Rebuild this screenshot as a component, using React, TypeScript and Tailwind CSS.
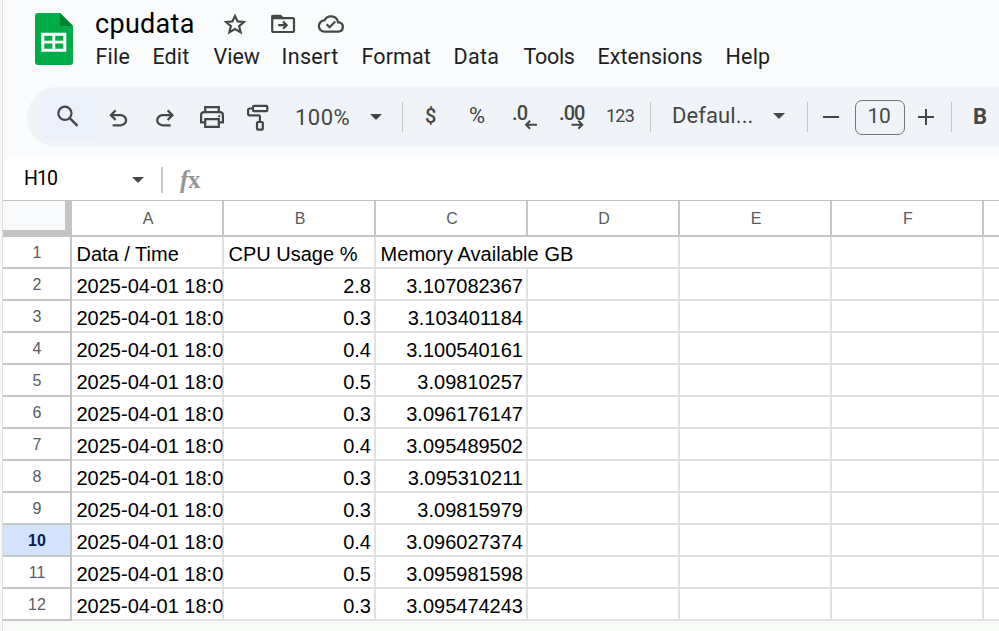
import React from "react";

const menus = [
  { label: "File", cls: "w-[57px] tracking-[0.2px]" },
  { label: "Edit", cls: "w-[61px] tracking-[0.1px]" },
  { label: "View", cls: "w-[68px] tracking-[0px]" },
  { label: "Insert", cls: "w-[80px] tracking-[0.35px]" },
  { label: "Format", cls: "w-[92px] tracking-[0.1px]" },
  { label: "Data", cls: "w-[70px] tracking-[0.3px]" },
  { label: "Tools", cls: "w-[74px] tracking-[-0.3px]" },
  { label: "Extensions", cls: "w-[128px] tracking-[0.05px]" },
  { label: "Help", cls: "w-[60px] tracking-[0.2px]" },
];

const columns = ["A", "B", "C", "D", "E", "F"];

const rows = [
  ["2.8", "3.107082367"],
  ["0.3", "3.103401184"],
  ["0.4", "3.100540161"],
  ["0.5", "3.09810257"],
  ["0.3", "3.096176147"],
  ["0.4", "3.095489502"],
  ["0.3", "3.095310211"],
  ["0.3", "3.09815979"],
  ["0.4", "3.096027374"],
  ["0.5", "3.095981598"],
  ["0.3", "3.095474243"],
];

function SheetsLogo() {
  return (
    <svg width="38" height="52" viewBox="0 0 38 52" className="mt-[13px] shrink-0">
      <path d="M3 0H25L38 13V49a3 3 0 0 1-3 3H3a3 3 0 0 1-3-3V3a3 3 0 0 1 3-3Z" fill="#00ac47" />
      <path d="M25 0L38 13H25Z" fill="#00832d" />
      <path
        d="M6.3 19.7H31.3V38.7H6.3ZM9.3 22.7V27.7H17.4V22.7ZM20.2 22.7V27.7H28.3V22.7ZM9.3 30.6V35.7H17.4V30.6ZM20.2 30.6V35.7H28.3V30.6Z"
        fill="#fff"
        fillRule="evenodd"
      />
    </svg>
  );
}

function TitleIcons() {
  return (
    <svg width="130" height="30" viewBox="220 8 130 30" fill="none" stroke="#444746" strokeWidth="2">
      <path
        d="M235 16L237.6 21.4L243.9 22L239.1 26.1L240.7 32.4L235 29L229.3 32.4L230.9 26.1L226.1 22L232.4 21.4Z"
        strokeWidth="2.1"
      />
      <path d="M272.2 17V30.5Q272.2 32 273.7 32H292.6Q294 32 294 30.5V19.6Q294 18.2 292.6 18.2H282.8L280.4 15.8H273.6Q272.2 15.8 272.2 17Z" strokeWidth="2.2" />
      <path d="M271.5 15H280.8L284 19.3H271.5Z" fill="#444746" stroke="none" />
      <path d="M278.2 25.2H286.4M283 21.6L286.7 25.2L283 28.8" strokeWidth="2.2" />
      <path
        d="M324.5 31.6H338.6A4.7 4.7 0 0 0 339.4 22.4H338.1A7.3 7.3 0 0 0 324.4 20.4A5.6 5.6 0 0 0 324.5 31.6Z"
        strokeWidth="2.3"
      />
      <path d="M326.6 24.3L329.6 27.2L335.2 21.6" strokeWidth="2.1" />
    </svg>
  );
}

const undoPath =
  "M7 19v-2h7.1q1.575 0 2.738-1T18 13.5 16.838 11 14.1 10H7.8l2.6 2.6L9 14 4 9l5-5 1.4 1.4L7.8 8h6.3q2.425 0 4.163 1.575T20 13.5t-1.737 3.925T14.1 19z";

function EditIcons() {
  return (
    <>
      <div className="flex h-[42px] w-[55px] items-center bg-[#ecf0fb]">
        <svg width="55" height="42" viewBox="41 95.5 55 42" fill="none" stroke="#444746" strokeWidth="2.2">
          <circle cx="64.9" cy="112.8" r="6.6" />
          <path d="M69.5 117.4L77.5 125.4" strokeWidth="2.5" />
        </svg>
      </div>
      <svg width="104" height="42" viewBox="96 96 104 42" fill="#444746">
        <path transform="translate(104.8 105.1) scale(1.12)" d={undoPath} />
        <path transform="translate(178.5 105.1) scale(-1.12 1.12)" d={undoPath} />
      </svg>
      <svg width="95" height="42" viewBox="200 96 95 42" fill="none" stroke="#444746" strokeWidth="2.2">
        <path d="M205.2 112V107.1H218.8V112" />
        <path d="M205 122.4H201.1V115.2Q201.1 112.2 204.1 112.2H219.9Q222.9 112.2 222.9 115.2V122.4H219" />
        <path d="M205.2 119.2H218.8V126.8H205.2Z" />
        <circle cx="219.2" cy="116.1" r="1.2" fill="#444746" stroke="none" />
        <rect x="253" y="105.8" width="14.3" height="5.4" rx="1" />
        <path d="M253 108.5H249.6Q248.1 108.5 248.1 110V113.8Q248.1 115.3 249.6 115.3H258.7Q259.9 115.3 259.9 116.6V121.7" />
        <rect x="257" y="122" width="5.8" height="7.7" rx="1" />
      </svg>
    </>
  );
}

function Caret() {
  return (
    <svg width="12" height="6" viewBox="0 0 12 6" className="shrink-0">
      <path d="M0 0H12L6 6Z" fill="#444746" />
    </svg>
  );
}

function Divider() {
  return <div className="h-[30px] w-px shrink-0 bg-[#c7c7c7]" />;
}

function Decimals({ digits, more }: { digits: string; more?: boolean }) {
  return (
    <div className="flex h-[30px] w-[28px] flex-col">
      <span className="h-[18px] text-[20px] leading-[22px] font-medium tracking-[-0.9px]">{digits}</span>
      <svg width="28" height="11" viewBox="0 0 28 11" fill="none" stroke="#444746" strokeWidth="2" className="shrink-0">
        {more ? (
          <path d="M12.5 4.7H23.2M19.3 0.7L23.3 4.7L19.3 8.7" />
        ) : (
          <path d="M25 4.7H14.2M18.1 0.7L14.1 4.7L18.1 8.7" />
        )}
      </svg>
    </div>
  );
}

function Toolbar() {
  return (
    <div className="ml-[24px] flex h-[60px] items-center overflow-hidden rounded-l-[30px] bg-[#f0f3f8] pl-[14px] text-[#444746]">
      <EditIcons />
      <span className="w-[75px] pt-px text-[22px] leading-[24px] tracking-[0.5px]">100%</span>
      <Caret />
      <div className="w-[20px] shrink-0" />
      <Divider />
      <span className="w-[66px] pb-[2px] pl-[22px] text-[20px] leading-[24px] font-medium">$</span>
      <span className="w-[43px] pb-[3px] text-[22px] leading-[24px]">%</span>
      <div className="w-[47px] pb-px">
        <Decimals digits=".0" />
      </div>
      <div className="w-[47px] pb-px">
        <Decimals digits=".00" more />
      </div>
      <span className="w-[44px] pb-[2px] text-[18px] leading-[24px] tracking-[-0.8px]">123</span>
      <Divider />
      <span className="w-[122px] shrink-0 pb-[2px] pl-[21px] text-[22px] leading-[24px] tracking-[0.1px]">Defaul...</span>
      <div className="w-[34px] shrink-0 pb-[2px]">
        <Caret />
      </div>
      <Divider />
      <div className="ml-[15px] h-[2px] w-[16px] shrink-0 bg-[#444746]" />
      <div className="mr-[13px] ml-[16px] flex h-[35px] w-[50px] shrink-0 items-center justify-center rounded-[7px] border border-[#747775] pr-[2px] text-[21px] tracking-[-0.4px]">
        10
      </div>
      <svg width="16" height="16" viewBox="0 0 16 16" stroke="#444746" strokeWidth="2" className="shrink-0">
        <path d="M0 8H16M8 0V16" />
      </svg>
      <div className="w-[17px] shrink-0" />
      <Divider />
      <span className="pl-[21px] text-[22px] leading-[24px] font-bold">B</span>
    </div>
  );
}

function FunctionIcon() {
  return (
    <span className="ml-[17px] flex h-[28px] items-center font-['Liberation_Serif',serif] text-[25px] leading-[28px] font-bold text-[#949696]">
      <i className="w-[8px]">f</i>
      <span>x</span>
    </span>
  );
}

function FormulaBar() {
  return (
    <div className="flex h-[41px] items-center bg-white pl-[21px]">
      <span className="w-[108px] pb-px text-[19.5px] leading-[24px] tracking-[-0.9px] text-black">H10</span>
      <Caret />
      <div className="mt-px ml-[17px] h-[26px] w-[2px] bg-[#c7c7c7]" />
      <FunctionIcon />
    </div>
  );
}

function HeadCells() {
  return (
    <div className="flex h-[36px] border-b-2 border-[#c4c6c5]">
      <div className="-mb-[2px] h-[36px] w-[69px] shrink-0 border-r-[7px] border-b-[7px] border-[#c4c4c4] bg-[#f8f9fa]" />
      {columns.map((c) => (
        <div
          key={c}
          className="flex h-[34px] w-[152px] shrink-0 items-center justify-center border-r-2 border-[#c4c6c5] pt-[2px] pl-[2px] text-[16px] text-[#575b5f]"
        >
          {c}
        </div>
      ))}
    </div>
  );
}

function RowHead({ n }: { n: number }) {
  const tone = n === 10 ? "bg-[#d3e3fd] font-bold text-[#041e49]" : "bg-white text-[#575b5f]";
  return (
    <div
      className={
        "flex h-[32px] w-[69px] shrink-0 items-center justify-center border-r-2 border-b-2 border-[#c4c6c5] pt-px pl-px text-[16px] " + tone
      }
    >
      {n}
    </div>
  );
}

const cell = "h-[32px] w-[152px] shrink-0 border-r-2 border-b-2 border-[#e1e1e1] leading-[34px] whitespace-nowrap";

function Grid() {
  return (
    <div className="border-t border-[#c0c0c0] bg-white font-['Liberation_Sans',Arial,sans-serif] text-[20px] text-black">
      <HeadCells />
      <div className="flex">
        <RowHead n={1} />
        <div className={cell + " pl-[4.5px]"}>Data / Time</div>
        <div className={cell + " pl-[4.5px]"}>CPU Usage %</div>
        <div className="h-[32px] w-[304px] shrink-0 border-r-2 border-b-2 border-[#e1e1e1] pl-[4.5px] leading-[34px] tracking-[0.05px]">
          Memory Available GB
        </div>
        <div className={cell} />
        <div className={cell} />
        <div className={cell} />
      </div>
      {rows.map(([cpu, mem], i) => (
        <div key={i} className="flex">
          <RowHead n={i + 2} />
          <div className={cell + " pl-[4.5px]"}>
            <div className="-mr-[2px] overflow-hidden">2025-04-01 18:0</div>
          </div>
          <div className={cell + " pr-[3px] text-right"}>{cpu}</div>
          <div className={cell + " pr-[3px] text-right"}>{mem}</div>
          <div className={cell} />
          <div className={cell} />
          <div className={cell} />
          <div className={cell} />
        </div>
      ))}
    </div>
  );
}

export default function App() {
  return (
    <div className="flex h-[631px] w-[999px] overflow-hidden bg-[#f9fbfd] font-['Roboto',sans-serif]">
      <div className="w-[3px] shrink-0 border-r border-[#dedfe0] bg-[#f7f7f7]" />
      <div className="w-[996px] shrink-0 overflow-hidden bg-[#f8faf8]">
        <header className="flex h-[87px] bg-[#f9fbfd] pl-[32px]">
          <SheetsLogo />
          <div className="ml-[22px] pt-[8px]">
            <div className="flex h-[30px] items-center">
              <h1 className="w-[125px] pt-[2px] text-[27px] leading-[30px] tracking-[0.3px] text-black">cpudata</h1>
              <TitleIcons />
            </div>
            <nav className="mt-[6px] flex text-[21.5px] leading-[26px] text-[#1f1f1f] pl-[0.5px]">
              {menus.map((m) => (
                <span key={m.label} className={m.cls}>
                  {m.label}
                </span>
              ))}
            </nav>
          </div>
        </header>
        <div className="h-[72px] bg-[#f9fbfd]">
          <Toolbar />
        </div>
        <FormulaBar />
        <Grid />
      </div>
    </div>
  );
}
